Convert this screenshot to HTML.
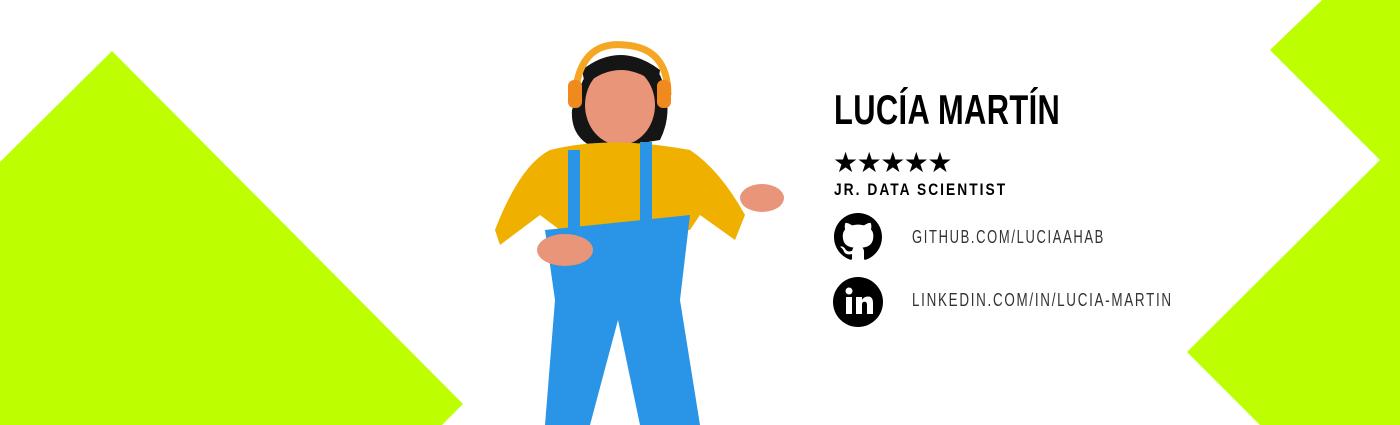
<!DOCTYPE html>
<html><head><style>
html,body{margin:0;padding:0;width:1400px;height:425px;overflow:hidden;background:#fff;}
.t{position:absolute;font-family:"Liberation Sans Narrow","Liberation Sans",sans-serif;color:#000;white-space:nowrap;transform-origin:left top;}
</style></head><body>
<svg width="1400" height="425" style="position:absolute;left:0;top:0">
<polygon points="0,162 112,51 463,404 442,425 0,425" fill="#bdff00"/>
<polygon points="1322,0 1400,0 1400,425 1260,425 1187,352 1380,160 1270,50" fill="#bdff00"/>
<path d="M583,80 Q620,40 660,75 Q675,110 660,140 L600,150 Q570,140 572,110 Z" fill="#151515"/>
<ellipse cx="620" cy="105" rx="35" ry="40" fill="#e8957a"/>
<path d="M585,85 Q620,55 658,85 L660,70 Q620,40 582,70 Z" fill="#151515"/>
<path d="M575,95 Q580,40 625,45 Q668,48 668,95" fill="none" stroke="#f5a623" stroke-width="7"/>
<rect x="568" y="80" width="14" height="28" rx="6" fill="#f08a1e"/>
<rect x="657" y="80" width="14" height="28" rx="6" fill="#f08a1e"/>
<path d="M550,150 Q610,135 690,150 Q720,170 745,215 L735,240 L700,215 L690,230 L560,230 L540,215 L500,245 L495,230 Q520,165 550,150 Z" fill="#f0b000"/>
<path d="M545,230 L690,215 L680,300 L700,425 L640,425 L618,320 L590,425 L545,425 L555,300 Z" fill="#2a95e6"/>
<rect x="568" y="150" width="12" height="80" fill="#2a95e6"/>
<rect x="640" y="142" width="12" height="80" fill="#2a95e6"/>
<ellipse cx="565" cy="250" rx="28" ry="16" fill="#e8957a"/>
<ellipse cx="762" cy="198" rx="22" ry="14" fill="#e8957a"/>
</svg>
<div class="t" style="left:834px;top:86px;font-size:42px;font-weight:bold;letter-spacing:0.5px;transform:scaleX(0.735)">LUCÍA MARTÍN</div>
<div class="t" style="left:833px;top:146px;font-size:28px;letter-spacing:-1.5px">★★★★★</div>
<div class="t" style="left:834px;top:180px;font-size:17px;font-weight:bold;letter-spacing:2.5px;transform:scaleX(0.81)">JR. DATA SCIENTIST</div>
<svg width="48" height="48" viewBox="0 0 16 16" style="position:absolute;left:834px;top:213px"><path d="M8 0C3.58 0 0 3.58 0 8c0 3.540 2.290 6.530 5.470 7.590.4.07.55-.17.55-.38 0-.19-.01-.82-.01-1.490-2.010.37-2.530-.49-2.690-.94-.09-.23-.48-.94-.82-1.130-.28-.15-.68-.52-.01-.53.63-.01 1.080.58 1.230.82.72 1.210 1.870.87 2.330.66.07-.52.28-.87.51-1.070-1.780-.2-3.640-.89-3.640-3.950 0-.87.31-1.590.82-2.150-.08-.2-.36-1.020.08-2.120 0 0 .67-.21 2.200.82.64-.18 1.320-.27 2-.27.68 0 1.360.09 2 .27 1.530-1.040 2.200-.82 2.200-.82.44 1.100.16 1.920.08 2.120.51.56.82 1.270.82 2.150 0 3.070-1.870 3.750-3.650 3.950.29.25.54.73.54 1.480 0 1.070-.01 1.930-.01 2.200 0 .21.15.46.55.38A8.013 8.013 0 0016 8c0-4.420-3.580-8-8-8z"/></svg>
<svg width="50" height="50" style="position:absolute;left:833px;top:277px"><circle cx="25" cy="25" r="25" fill="#000"/><rect x="13" y="20" width="6" height="17" fill="#fff"/><circle cx="16" cy="14" r="3.5" fill="#fff"/><path d="M23 20h6v3c1-2 3-3.5 6-3.5 4 0 5 3 5 6.5V37h-6v-9c0-2-.6-3.3-2.5-3.3S29 26 29 28v9h-6z" fill="#fff"/></svg>
<div class="t" style="left:912px;top:227px;font-size:18px;letter-spacing:2.3px;color:#333;transform:scaleX(0.72)">GITHUB.COM/LUCIAAHAB</div>
<div class="t" style="left:912px;top:290px;font-size:18px;letter-spacing:2.3px;color:#333;transform:scaleX(0.745)">LINKEDIN.COM/IN/LUCIA-MARTIN</div>
</body></html>
